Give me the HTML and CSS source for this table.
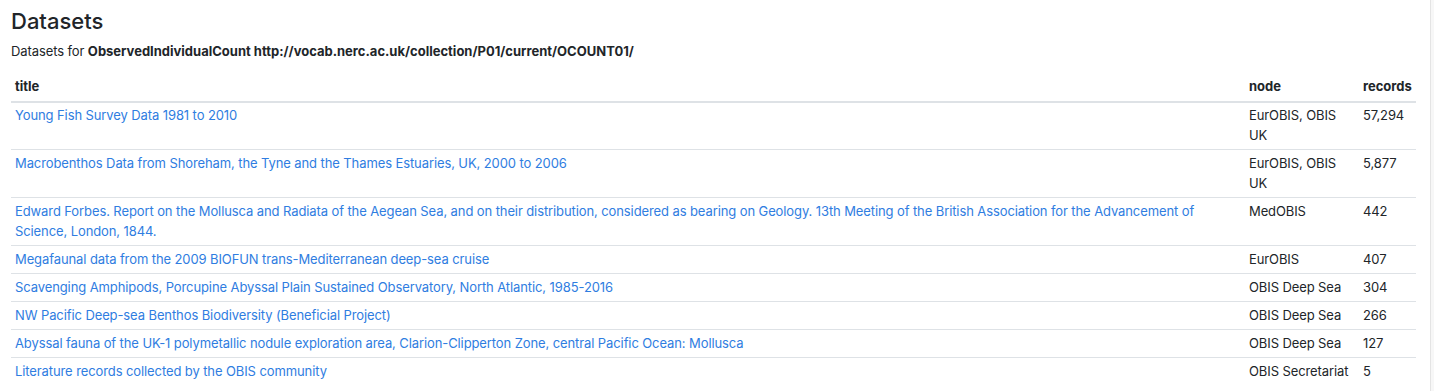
FILE: index.html
```html
<!DOCTYPE html>
<html>
<head>
<meta charset="utf-8">
<link rel="stylesheet" href="styles.css">
</head>
<body>
<div class="page">
  <main class="content">
    <h1 class="title">Datasets</h1>
    <p class="subtitle">Datasets for <strong>ObservedIndividualCount http://vocab.nerc.ac.uk/collection/P01/current/OCOUNT01/</strong></p>
    <table class="datatable">
      <colgroup>
        <col class="c-title">
        <col class="c-node">
        <col class="c-rec">
      </colgroup>
      <thead>
        <tr><th>title</th><th>node</th><th>records</th></tr>
      </thead>
      <tbody>
        <tr><td><a href="#">Young Fish Survey Data 1981 to 2010</a></td><td>EurOBIS, OBIS UK</td><td>57,294</td></tr>
        <tr><td><a href="#">Macrobenthos Data from Shoreham, the Tyne and the Thames Estuaries, UK, 2000 to 2006</a></td><td>EurOBIS, OBIS UK</td><td>5,877</td></tr>
        <tr><td><a href="#">Edward Forbes. Report on the Mollusca and Radiata of the Aegean Sea, and on their distribution, considered as bearing on Geology. 13th Meeting of the British Association for the Advancement of Science, London, 1844.</a></td><td>MedOBIS</td><td>442</td></tr>
        <tr><td><a href="#">Megafaunal data from the 2009 BIOFUN trans-Mediterranean deep-sea cruise</a></td><td>EurOBIS</td><td>407</td></tr>
        <tr><td><a href="#">Scavenging Amphipods, Porcupine Abyssal Plain Sustained Observatory, North Atlantic, 1985-2016</a></td><td>OBIS Deep Sea</td><td>304</td></tr>
        <tr><td><a href="#">NW Pacific Deep-sea Benthos Biodiversity (Beneficial Project)</a></td><td>OBIS Deep Sea</td><td>266</td></tr>
        <tr><td><a href="#">Abyssal fauna of the UK-1 polymetallic nodule exploration area, Clarion-Clipperton Zone, central Pacific Ocean: Mollusca</a></td><td>OBIS Deep Sea</td><td>127</td></tr>
        <tr><td><a href="#">Literature records collected by the OBIS community</a></td><td>OBIS Secretariat</td><td>5</td></tr>
      </tbody>
    </table>
  </main>
  <div class="gutter"></div>
</div>
</body>
</html>
```

FILE: styles.css
```css
html, body {
  margin: 0;
  padding: 0;
  background: #fff;
}
body {
  font-family: Inter, "Liberation Sans", sans-serif;
  font-size: 13px;
  line-height: 20px;
  color: #212529;
}
.page {
  display: flex;
  min-height: 391px;
}
.content {
  flex: 1;
  padding: 0 14px 0 11px;
  min-width: 0;
}
.gutter {
  width: 3px;
  background: #f7f7f7;
  border-left: 1px solid #e4e4e4;
}
.title {
  font-size: 22px;
  font-weight: 500;
  line-height: 26px;
  margin: 8px 0 7px;
}
.subtitle {
  margin: 0 0 11px;
  letter-spacing: -0.1px;
}
.subtitle strong {
  font-weight: 700;
  letter-spacing: 0;
}
.datatable {
  width: 100%;
  border-collapse: collapse;
  table-layout: fixed;
}
.c-node { width: 114px; }
.c-rec { width: 57px; }
.datatable th {
  text-align: left;
  font-weight: 700;
  padding: 4px 4px 5px;
  border-bottom: 2px solid #dee2e6;
}
.datatable td {
  padding: 3px 4px 4px;
  vertical-align: top;
  border-top: 1px solid #dee2e6;
  letter-spacing: -0.1px;
}
.datatable tbody tr:first-child td {
  border-top: 0;
  padding-top: 2px;
}
.datatable a {
  color: #2f7de1;
  text-decoration: none;
}
```
